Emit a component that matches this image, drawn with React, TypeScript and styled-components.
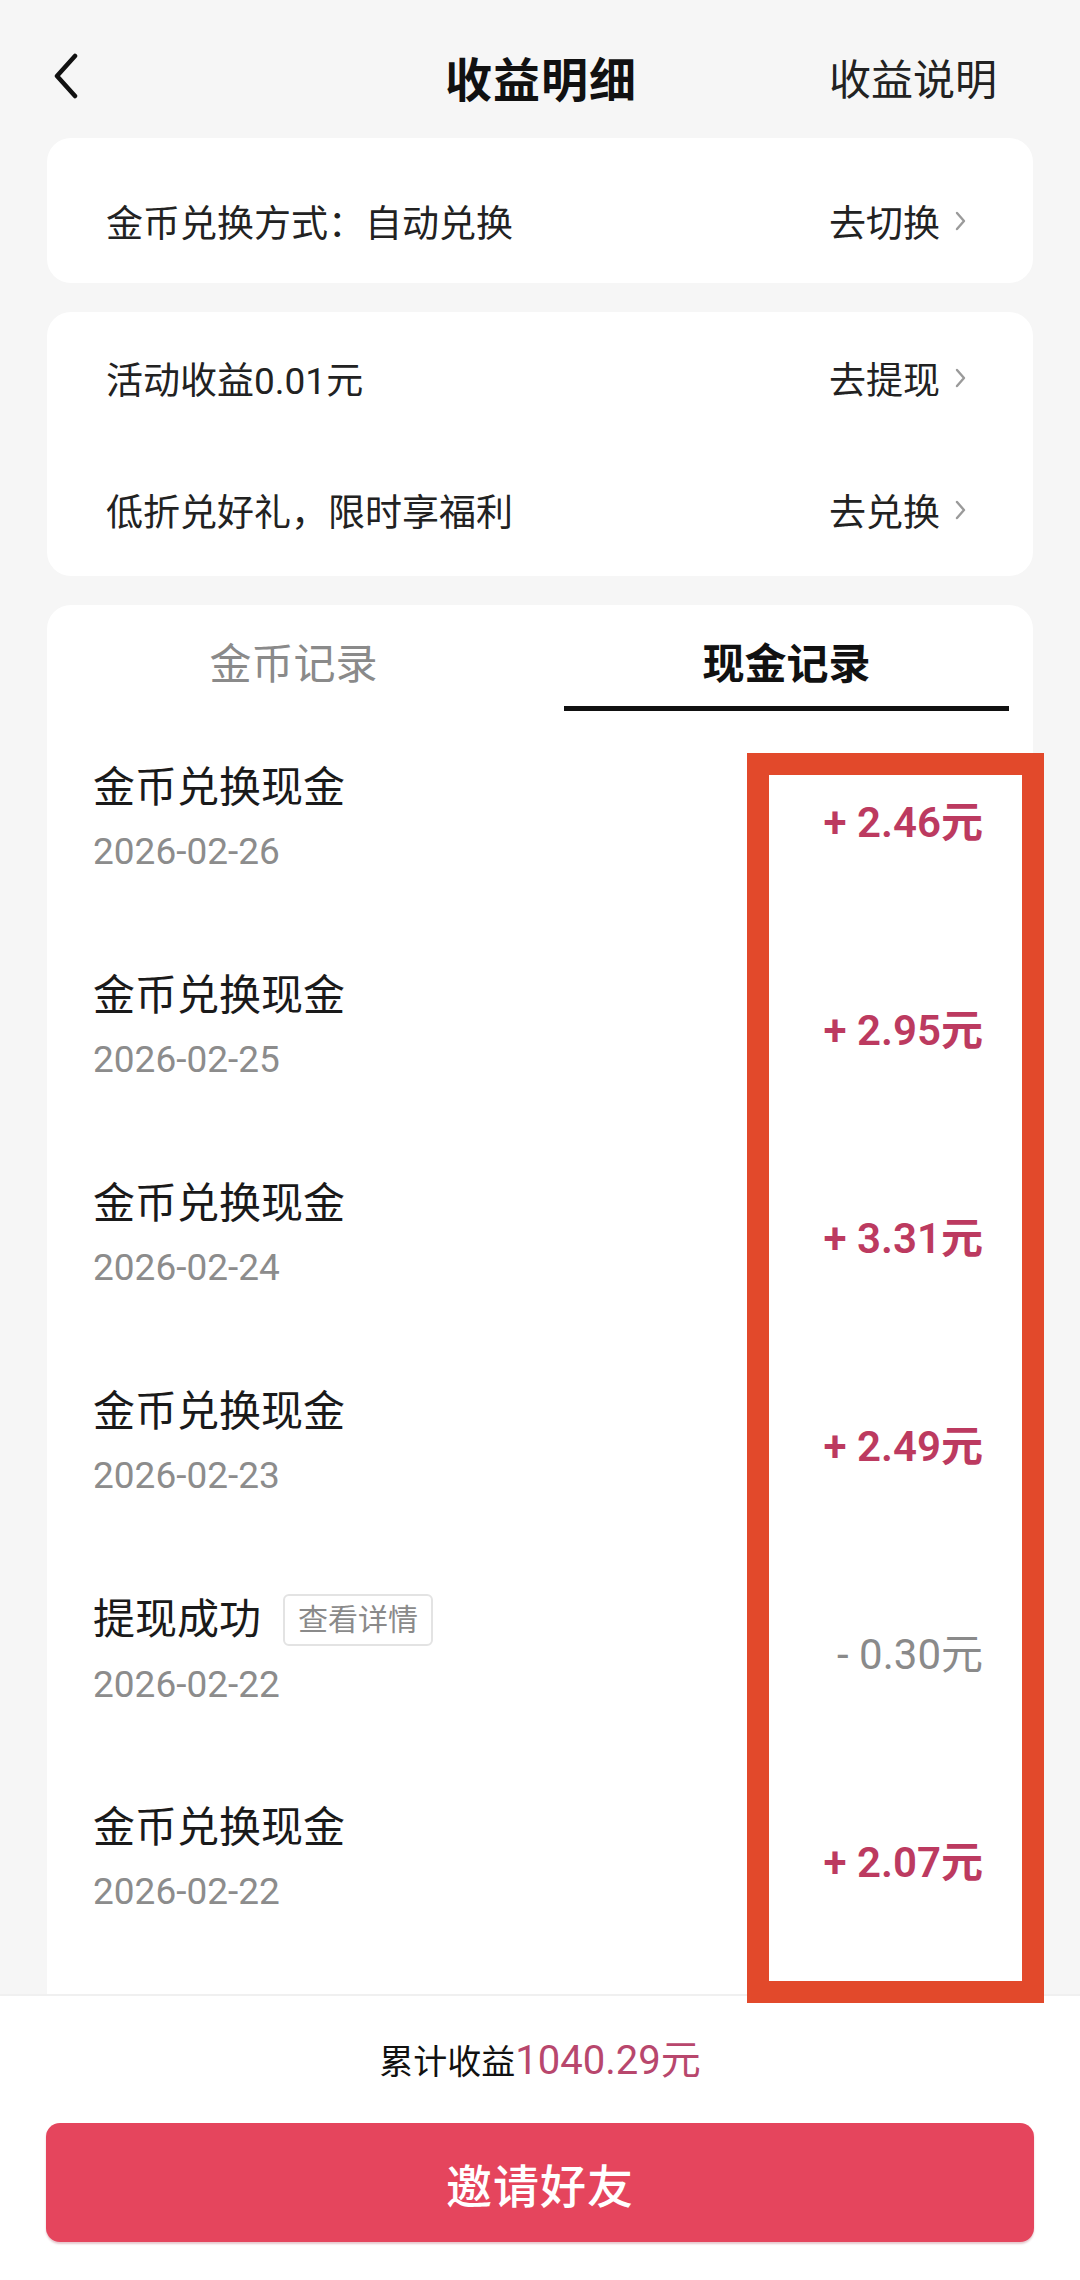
import React, { useState } from "react";
import styled, { createGlobalStyle } from "styled-components";

const GlobalStyle = createGlobalStyle`
  html, body {
    margin: 0;
    padding: 0;
    background: #f6f6f6;
  }
  body {
    font-family: Roboto, "Noto Sans CJK SC", "Noto Sans", sans-serif;
    color: #1a1a1a;
  }
  * {
    box-sizing: border-box;
  }
`;

const Page = styled.div`
  position: relative;
  height: 2280px;
  display: flex;
  flex-direction: column;
  overflow: hidden;
  background: #f6f6f6;
`;

const Header = styled.header`
  height: 138px;
  padding: 14px 52px 0 54px;
  display: grid;
  grid-template-columns: 1fr auto 1fr;
  align-items: center;
  flex-shrink: 0;
`;

const BackButton = styled.button`
  justify-self: start;
  width: 24px;
  height: 46px;
  padding: 0;
  border: none;
  background: transparent;
  display: flex;
  align-items: center;
`;

const Title = styled.h1`
  margin: 0;
  font-size: 47px;
  font-weight: 700;
  color: #111;
  letter-spacing: 1px;
`;

const HeaderLink = styled.span`
  justify-self: end;
  margin-right: 31px;
  font-size: 42px;
  color: #222;
`;

const Content = styled.main`
  flex: 1;
  min-height: 0;
  display: flex;
  flex-direction: column;
  gap: 29px;
  padding: 0 47px;
`;

const Card = styled.section<{ $padTop?: number }>`
  background: #fff;
  border-radius: 24px;
  padding-top: ${(p) => p.$padTop ?? 0}px;
  flex-shrink: 0;
`;

const ActionRow = styled.div<{ $height: number }>`
  height: ${(p) => p.$height}px;
  display: flex;
  align-items: center;
  justify-content: space-between;
  padding: 0 66px 0 59px;
  font-size: 37px;
  color: #222;
`;

const ActionLink = styled.span`
  display: flex;
  align-items: center;
  gap: 15px;
`;

const RecordCard = styled.section`
  flex: 1;
  min-height: 0;
  background: #fff;
  border-radius: 24px 24px 0 0;
  overflow: hidden;
`;

const Tabs = styled.div`
  display: grid;
  grid-template-columns: 1fr 1fr;
  height: 109px;
`;

const Tab = styled.div<{ $active: boolean }>`
  display: flex;
  flex-direction: column;
  align-items: center;
  padding-top: 38px;
  font-size: 42px;
  line-height: 44px;
  font-weight: ${(p) => (p.$active ? 700 : 400)};
  color: ${(p) => (p.$active ? "#111" : "#8a8a8a")};
  cursor: pointer;

  &::after {
    content: "";
    align-self: stretch;
    margin: 19px 24px 0;
    height: 5px;
    background: ${(p) => (p.$active ? "#111" : "transparent")};
  }
`;

const RecordRow = styled.div`
  height: 208px;
  display: flex;
  align-items: center;
  justify-content: space-between;
  padding: 0 50px 0 46px;
`;

const RecordInfo = styled.div`
  display: flex;
  flex-direction: column;
  gap: 17px;
`;

const RecordTitle = styled.div`
  display: flex;
  align-items: center;
  gap: 22px;
  font-size: 42px;
  line-height: 50px;
  color: #1a1a1a;
`;

const DetailBadge = styled.span`
  height: 52px;
  padding: 0 13px;
  display: inline-flex;
  align-items: center;
  border: 2px solid #e3e3e3;
  border-radius: 6px;
  font-size: 30px;
  color: #8a8a8a;
`;

const RecordDate = styled.div`
  font-size: 37px;
  line-height: 44px;
  color: #8c8c8c;
`;

const Amount = styled.div<{ $positive: boolean }>`
  font-size: 42px;
  font-weight: ${(p) => (p.$positive ? 600 : 400)};
  color: ${(p) => (p.$positive ? "#bc3a60" : "#8a8a8a")};
`;

const Footer = styled.footer`
  flex-shrink: 0;
  height: 286px;
  background: #fff;
  border-top: 2px solid #f0f0f0;
  padding: 43px 46px 0;
  display: flex;
  flex-direction: column;
  align-items: center;
`;

const Total = styled.div`
  font-size: 34px;
  line-height: 44px;
  color: #111;
`;

const TotalValue = styled.span`
  font-size: 40px;
  color: #b8476d;
`;

const InviteButton = styled.button`
  margin-top: 39px;
  width: 100%;
  height: 119px;
  border: none;
  border-radius: 14px;
  background: #e5455d;
  box-shadow: 0 2px 2px rgba(150, 40, 60, 0.25);
  color: #fff;
  font-family: inherit;
  font-size: 46px;
  font-weight: 500;
  letter-spacing: 1px;
`;

const Annotation = styled.div`
  position: absolute;
  left: 747px;
  top: 753px;
  width: 297px;
  height: 1250px;
  border: 22px solid #e2492b;
  pointer-events: none;
`;

const Chevron = () => (
  <svg width="12" height="20" viewBox="0 0 12 20">
    <path d="M2 2l7 8-7 8" fill="none" stroke="#9a9a9a" strokeWidth="2.4" strokeLinecap="round" strokeLinejoin="round" />
  </svg>
);

const BackIcon = () => (
  <svg width="24" height="46" viewBox="0 0 24 46">
    <path d="M21 3L3 23l18 20" fill="none" stroke="#111" strokeWidth="4.5" strokeLinecap="round" strokeLinejoin="round" />
  </svg>
);

interface CashRecord {
  title: string;
  date: string;
  amount: string;
  positive: boolean;
  detail?: boolean;
}

const records: CashRecord[] = [
  { title: "金币兑换现金", date: "2026-02-26", amount: "+ 2.46元", positive: true },
  { title: "金币兑换现金", date: "2026-02-25", amount: "+ 2.95元", positive: true },
  { title: "金币兑换现金", date: "2026-02-24", amount: "+ 3.31元", positive: true },
  { title: "金币兑换现金", date: "2026-02-23", amount: "+ 2.49元", positive: true },
  { title: "提现成功", date: "2026-02-22", amount: "- 0.30元", positive: false, detail: true },
  { title: "金币兑换现金", date: "2026-02-22", amount: "+ 2.07元", positive: true },
];

const App: React.FC = () => {
  const [tab, setTab] = useState<"coin" | "cash">("cash");

  return (
    <Page>
      <GlobalStyle />
      <Header>
        <BackButton aria-label="返回">
          <BackIcon />
        </BackButton>
        <Title>收益明细</Title>
        <HeaderLink>收益说明</HeaderLink>
      </Header>

      <Content>
        <Card $padTop={20}>
          <ActionRow $height={125}>
            <span>金币兑换方式：自动兑换</span>
            <ActionLink>
              去切换
              <Chevron />
            </ActionLink>
          </ActionRow>
        </Card>

        <Card>
          <ActionRow $height={132}>
            <span>活动收益0.01元</span>
            <ActionLink>
              去提现
              <Chevron />
            </ActionLink>
          </ActionRow>
          <ActionRow $height={132}>
            <span>低折兑好礼，限时享福利</span>
            <ActionLink>
              去兑换
              <Chevron />
            </ActionLink>
          </ActionRow>
        </Card>

        <RecordCard>
          <Tabs>
            <Tab $active={tab === "coin"} onClick={() => setTab("coin")}>
              金币记录
            </Tab>
            <Tab $active={tab === "cash"} onClick={() => setTab("cash")}>
              现金记录
            </Tab>
          </Tabs>
          {records.map((r, i) => (
            <RecordRow key={i}>
              <RecordInfo>
                <RecordTitle>
                  {r.title}
                  {r.detail && <DetailBadge>查看详情</DetailBadge>}
                </RecordTitle>
                <RecordDate>{r.date}</RecordDate>
              </RecordInfo>
              <Amount $positive={r.positive}>{r.amount}</Amount>
            </RecordRow>
          ))}
        </RecordCard>
      </Content>

      <Footer>
        <Total>
          累计收益<TotalValue>1040.29元</TotalValue>
        </Total>
        <InviteButton>邀请好友</InviteButton>
      </Footer>

      <Annotation />
    </Page>
  );
};

export default App;
